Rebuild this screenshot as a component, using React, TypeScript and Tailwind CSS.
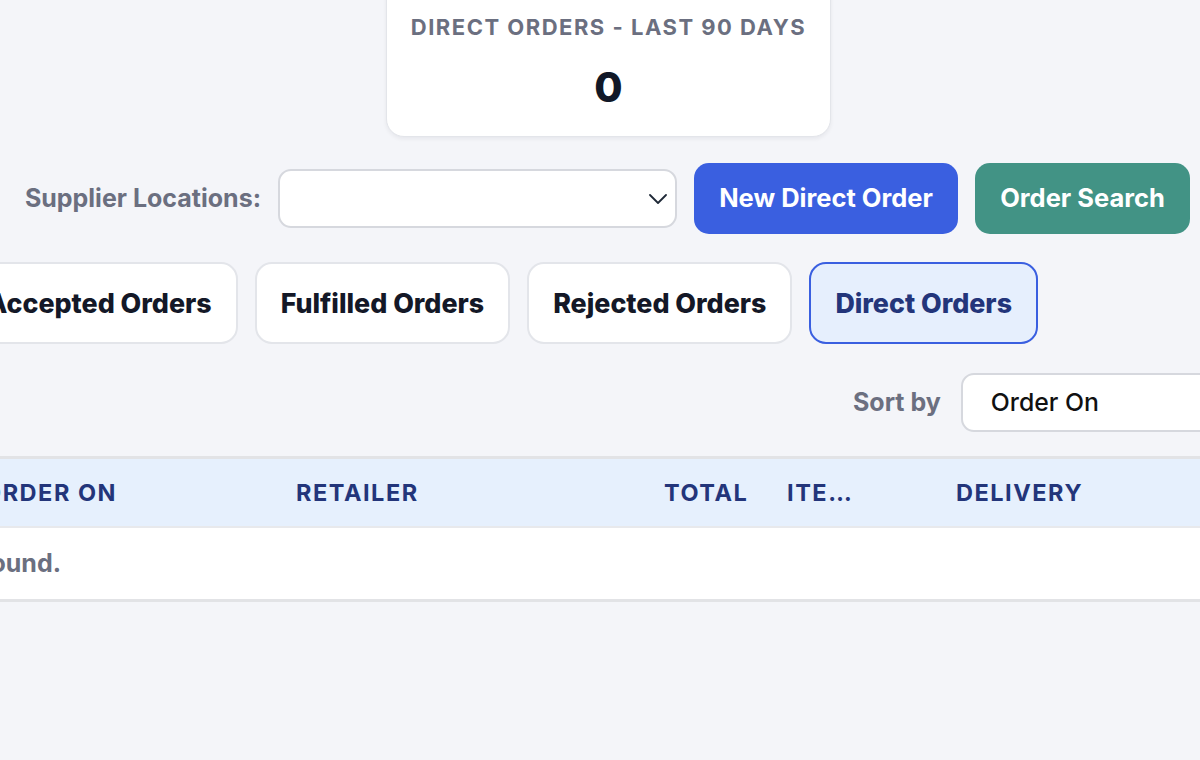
const tabs = ['Pending Orders', 'Accepted Orders', 'Fulfilled Orders', 'Rejected Orders', 'Direct Orders']

function StatCard() {
  return (
    <div className="ml-[386px] -mt-[30px] flex h-[167px] w-[445px] flex-col items-center rounded-[18px] border border-[#e3e5ea] bg-white pt-[41px] shadow-[0_2px_4px_rgba(15,23,42,0.06)]">
      <p className="text-[22px] font-bold uppercase leading-[30px] tracking-[0.068em] text-[#6b6f80]">Direct Orders - Last 90 Days</p>
      <p className="mt-[25px] text-[41px] font-extrabold leading-none text-[#111827]">0</p>
    </div>
  )
}

function Toolbar() {
  return (
    <div className="mt-[26px] flex items-center justify-end gap-[17px] pr-[10px]">
      <span className="text-[25px] font-bold text-[#6b6f80]">Supplier Locations:</span>
      <div className="flex h-[59px] w-[399px] items-center justify-end rounded-[13px] border-2 border-[#d6d8de] bg-white pr-[8px]">
        <svg width="18" height="10" viewBox="0 0 18 10" fill="none" className="text-[#1f2937]">
          <polyline points="1,1 9,9 17,1" stroke="currentColor" strokeWidth="1.8" strokeLinecap="round" strokeLinejoin="round" />
        </svg>
      </div>
      <button className="h-[71px] w-[264px] rounded-[15px] bg-[#3a5fe0] text-[25.5px] font-bold text-white">New Direct Order</button>
      <button className="h-[71px] w-[215px] rounded-[15px] bg-[#429385] text-[25.5px] font-bold text-white">Order Search</button>
    </div>
  )
}

function Tabs() {
  return (
    <div className="mt-[28px] flex w-[1038px] justify-end gap-[17px]">
      {tabs.map((tab) => {
        const active = tab === 'Direct Orders'
        return (
          <div
            key={tab}
            className={
              active
                ? 'flex h-[82px] shrink-0 items-center whitespace-nowrap rounded-[17px] border-2 border-[#3a5fe0] bg-[#e6effd] px-[24px] text-[26.8px] font-extrabold text-[#23357a]'
                : 'flex h-[82px] shrink-0 items-center whitespace-nowrap rounded-[17px] border-2 border-[#e3e5ea] bg-white px-[24px] text-[26.8px] font-extrabold text-[#141827]'
            }
          >
            {tab}
          </div>
        )
      })}
    </div>
  )
}

function SortRow() {
  return (
    <div className="mt-[29px] flex items-center gap-[20px] pl-[853px]">
      <span className="whitespace-nowrap text-[25px] font-bold text-[#6b6f80]">Sort by</span>
      <div className="flex h-[59px] w-[320px] shrink-0 items-center rounded-[13px] border-2 border-[#d6d8de] bg-white pl-[28px] text-[24.8px] font-medium text-[#111]">
        Order On
      </div>
    </div>
  )
}

function OrdersTable() {
  return (
    <div className="-ml-[35px] mt-[24px] w-[1300px] border-y-[3px] border-[#e2e3e6] bg-white">
      <div className="flex h-[69px] items-center border-b-2 border-[#e8e9ec] bg-[#e6f0fd] text-[23.5px] font-bold uppercase tracking-[0.065em] text-[#23357a]">
        <div className="w-[313px] shrink-0 whitespace-nowrap pl-[18px]">Order On</div>
        <div className="w-[368px] shrink-0 pl-[18px]">Retailer</div>
        <div className="w-[123px] shrink-0 pl-[18px]">Total</div>
        <div className="w-[169px] shrink-0 pl-[18px]">
          <span className="block w-[66px] truncate">Items</span>
        </div>
        <div className="w-[260px] shrink-0 pl-[18px]">Delivery</div>
        <div className="pl-[18px]">Status</div>
      </div>
      <div className="flex h-[71px] items-center">
        <div className="flex w-[96px] shrink-0 justify-end">
          <span className="whitespace-nowrap text-[25px] font-bold text-[#6b6f80]">No direct orders found.</span>
        </div>
      </div>
    </div>
  )
}

export default function App() {
  return (
    <div className="h-[760px] w-[1200px] overflow-hidden bg-[#f4f5f9] font-['Inter',sans-serif]">
      <StatCard />
      <Toolbar />
      <Tabs />
      <SortRow />
      <OrdersTable />
    </div>
  )
}
